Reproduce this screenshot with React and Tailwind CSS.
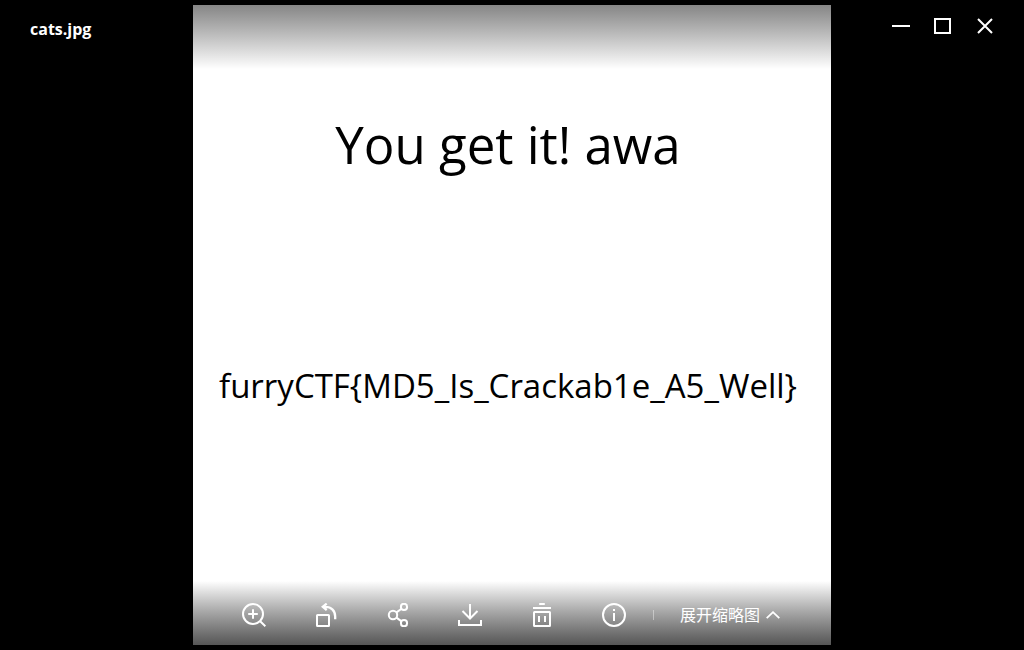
import React from "react";

function Icon({ children, className = "size-6" }) {
  return (
    <svg
      viewBox="0 0 24 24"
      className={className}
      fill="none"
      stroke="currentColor"
      strokeWidth="2"
      aria-hidden="true"
    >
      {children}
    </svg>
  );
}

const tools = [
  {
    label: "放大",
    icon: (
      <>
        <circle cx="11" cy="11" r="10" />
        <path d="M18.2 18.2 23.4 23.2M11 6.2v9.6M6.2 11h9.6" />
      </>
    ),
  },
  {
    label: "旋转",
    icon: (
      <>
        <rect x="3" y="12" width="12" height="11" rx="0.5" />
        <path
          strokeWidth="2.3"
          d="M12.7 0.6 8.8 3.8 12.7 7.2M9 3.8h2.5C17.5 3.8 21.2 8 21.2 13.5V16.3"
        />
      </>
    ),
  },
  {
    label: "分享",
    icon: (
      <>
        <circle cx="7" cy="12" r="4.2" />
        <circle cx="18" cy="3.9" r="3.1" />
        <circle cx="18" cy="20.2" r="3.1" />
        <path d="M10.5 9.4 15.5 5.8M10.5 14.6 15.5 18.4" />
      </>
    ),
  },
  {
    label: "下载",
    icon: (
      <path d="M12 1v14.5M4.5 8 12 15.5 19.5 8M1 17v5h22V17" />
    ),
  },
  {
    label: "删除",
    icon: (
      <>
        <path d="M9.2 1h5.6M3 5h18M9 13v6M15 13v6" />
        <rect x="4" y="9" width="16" height="14" rx="0.5" />
      </>
    ),
  },
  {
    label: "信息",
    icon: (
      <>
        <circle cx="12" cy="12" r="11" />
        <path d="M12 6v2M12 10v8" />
      </>
    ),
  },
];

const windowControls = [
  { label: "最小化", icon: <path d="M3 12h18" /> },
  { label: "最大化", icon: <rect x="4" y="5" width="15" height="14" /> },
  { label: "关闭", icon: <path d="M5 5 19 19M19 5 5 19" /> },
];

export default function App() {
  return (
    <div className="flex h-screen bg-black py-[5px] font-['Open_Sans','Noto_Sans_CJK_SC',sans-serif] text-white">
      <header className="min-w-0 flex-1 basis-8 pt-3 pl-[30px]">
        <h1 className="truncate text-base leading-6 font-bold">cats.jpg</h1>
      </header>

      <main className="flex aspect-[638/640] h-full flex-col bg-white">
        <div className="h-16 bg-linear-to-b from-[#868686] to-white" />
        <div className="flex flex-1 flex-col items-center pt-[39px] pr-2 whitespace-nowrap text-black">
          <p className="text-[51px] leading-[72px]">You get it! awa</p>
          <p className="mt-[182px] text-[33px] leading-[48px]">
            furryCTF&#123;MD5_Is_Crackab1e_A5_Well&#125;
          </p>
        </div>
        <div className="flex h-16 items-center justify-center bg-linear-to-b from-white via-[#a4a4a4] to-[#565656] pt-1 pr-[2px]">
          <div className="flex gap-12">
            {tools.map((tool) => (
              <button key={tool.label} type="button" aria-label={tool.label}>
                <Icon>{tool.icon}</Icon>
              </button>
            ))}
          </div>
          <div className="mr-[26px] ml-[27px] h-[10px] w-px bg-white/40" />
          <button type="button" className="flex items-center gap-[6px]">
            <span className="text-base leading-6">展开缩略图</span>
            <svg
              viewBox="0 0 14 8"
              className="h-2 w-[14px]"
              fill="none"
              stroke="currentColor"
              strokeWidth="1.8"
              aria-hidden="true"
            >
              <path d="M0.7 7.2 7 1.2 13.3 7.2" />
            </svg>
          </button>
        </div>
      </main>

      <div className="flex min-w-0 flex-1 basis-8 items-start justify-end gap-[18px] pt-[9px] pr-[27px]">
        {windowControls.map((control) => (
          <button key={control.label} type="button" aria-label={control.label}>
            <Icon>{control.icon}</Icon>
          </button>
        ))}
      </div>
    </div>
  );
}
